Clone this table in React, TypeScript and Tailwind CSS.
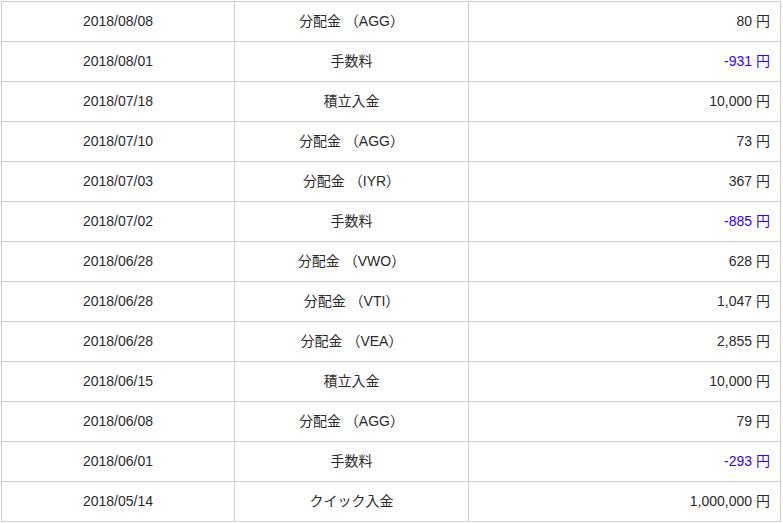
import React from "react";

const rows: [string, string, string, boolean][] = [
  ["2018/08/08", "分配金 （AGG）", "80 円", false],
  ["2018/08/01", "手数料", "-931 円", true],
  ["2018/07/18", "積立入金", "10,000 円", false],
  ["2018/07/10", "分配金 （AGG）", "73 円", false],
  ["2018/07/03", "分配金 （IYR）", "367 円", false],
  ["2018/07/02", "手数料", "-885 円", true],
  ["2018/06/28", "分配金 （VWO）", "628 円", false],
  ["2018/06/28", "分配金 （VTI）", "1,047 円", false],
  ["2018/06/28", "分配金 （VEA）", "2,855 円", false],
  ["2018/06/15", "積立入金", "10,000 円", false],
  ["2018/06/08", "分配金 （AGG）", "79 円", false],
  ["2018/06/01", "手数料", "-293 円", true],
  ["2018/05/14", "クイック入金", "1,000,000 円", false],
];

export default function App() {
  return (
    <div
      className="w-[783px] h-[523px] bg-white pl-[1px] pt-[1px] overflow-hidden"
      style={{ fontFamily: '"Liberation Sans", "Noto Sans CJK JP", sans-serif' }}
    >
      <table className="border-collapse text-[14px] text-[#2b2b2b]">
        <tbody>
          {rows.map((r, i) => (
            <tr key={i} className="h-[40px]">
              <td className="w-[233px] border border-[#d2cfc6] text-center p-0">{r[0]}</td>
              <td className="w-[234px] border border-[#d2cfc6] text-center p-0">{r[1]}</td>
              <td
                className={`w-[312px] border border-[#d2cfc6] text-right p-0 pr-[10px] ${
                  r[3] ? "text-[#3300ff]" : ""
                }`}
              >
                {r[2]}
              </td>
            </tr>
          ))}
        </tbody>
      </table>
    </div>
  );
}
